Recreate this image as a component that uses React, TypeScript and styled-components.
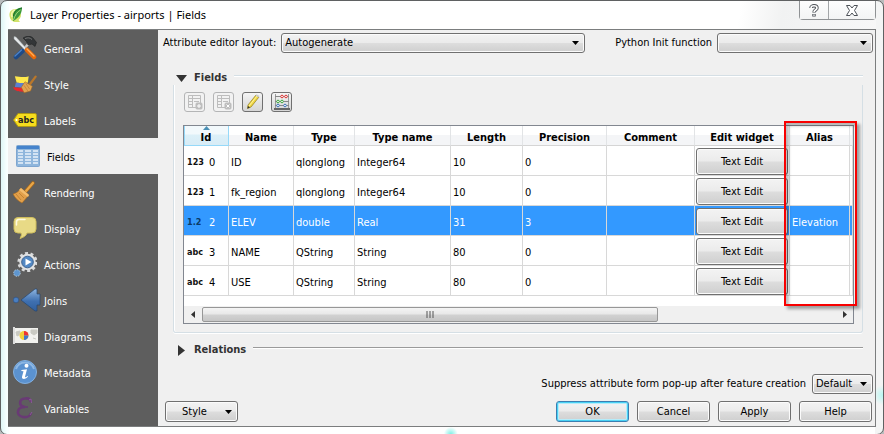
import React from "react";
import styled, { createGlobalStyle, css } from "styled-components";

const uiFont = '"DejaVu Sans Condensed", "DejaVu Sans", sans-serif';

const GlobalStyle = createGlobalStyle`
  * { box-sizing: border-box; }
  body { margin: 0; background: #b9bcbd; font: 11px/14px ${uiFont}; color: #000; }
  button, select { font: inherit; color: inherit; margin: 0; }
`;

/* ---------- window ---------- */

const Window = styled.div`
  min-height: 100vh;
  display: flex;
  flex-direction: column;
  padding: 0 7px 7px;
  border: 1px solid #5f6162;
  border-radius: 7px;
  background:
    radial-gradient(circle 7px at 51% 100%, #7ff0e6, transparent) no-repeat,
    radial-gradient(circle 10px at 100% 91%, #b8f7f2, transparent) no-repeat,
    linear-gradient(#fff, #fff) 8px 0 / calc(100% - 16px) 100% no-repeat,
    linear-gradient(90deg, #dff6f6, #f8ffff 6px, #f8f9f9 50%, #f3f4f4);
`;

const TitleBar = styled.header`
  display: flex;
  align-items: flex-start;
  height: 28px;
  padding-left: 1px;
  background: linear-gradient(100deg, transparent 84%, #f1f2f2 89%, #f7f7f7 100%);
`;

const TitleLabel = styled.h1`
  display: flex;
  align-items: center;
  gap: 7px;
  flex: 1;
  height: 28px;
  margin: 0;
  font: 11px/16px "Noto Sans", sans-serif;
`;

const CaptionButtons = styled.div`
  display: flex;
  border: 1px solid #8f9294;
  border-top: 0;
  border-radius: 0 0 4px 4px;
`;

const CaptionButton = styled.button<{ $wide?: boolean }>`
  display: grid;
  place-items: center;
  width: ${(p) => (p.$wide ? 47 : 28)}px;
  height: 18px;
  padding: 0;
  border: 0;
  background: linear-gradient(#fdfdfd, #f3f4f4);
  & + & { border-left: 1px solid #a3a6a8; }
`;

const Client = styled.div`
  flex: 1;
  display: flex;
  border: 1px solid #7b7d7e;
  border-left: 0;
  background: #f0f0f0;
`;

/* ---------- sidebar ---------- */

const Sidebar = styled.nav`
  flex: none;
  width: 150px;
  background: #5e5e5e;
`;

const NavItem = styled.a<{ $active?: boolean }>`
  display: flex;
  align-items: center;
  gap: 7px;
  height: 36px;
  padding-left: ${(p) => (p.$active ? 8 : 5)}px;
  color: ${(p) => (p.$active ? "#000" : "#fff")};
  background: ${(p) => (p.$active ? "#f0f0f0" : "transparent")};
  text-decoration: none;
`;

const NavIcon = styled.div`
  display: grid;
  place-items: center;
  flex: none;
  width: 24px;
  height: 28px;
`;

const NavLabel = styled.span`
  padding-top: 3px;
`;

/* ---------- shared controls ---------- */

const raised = css`
  border: 1px solid #707070;
  border-radius: 3px;
  box-shadow: inset 0 0 0 1px #fbfbfb;
  background: linear-gradient(#f3f3f3, #ebebeb 48%, #dddddd 52%, #cfcfcf);
`;

const PushButton = styled.button<{ $primary?: boolean }>`
  ${raised}
  width: 73px;
  height: 21px;
  padding: 0;
  ${(p) =>
    p.$primary &&
    css`
      border-color: #3c7fb1;
      box-shadow: inset 0 0 0 1px #48d1f4, inset 0 0 0 2px #b5ecfa;
    `}
`;

const MenuButton = styled(PushButton)`
  display: flex;
  align-items: center;
  justify-content: space-between;
  padding: 0 5px 0 16px;
`;

const SelectBox = styled.div<{ $width: number }>`
  display: grid;
  align-items: center;
  width: ${(p) => p.$width}px;
  > * { grid-area: 1 / 1; }
  svg { justify-self: end; margin-right: 6px; pointer-events: none; }
`;

const Select = styled.select`
  ${raised}
  appearance: none;
  width: 100%;
  height: 20px;
  padding: 0 3px;
`;

/* ---------- content ---------- */

const Content = styled.main`
  flex: 1;
  min-width: 0;
  display: flex;
  flex-direction: column;
  padding: 3px 2px 4px 5px;
`;

const FormRow = styled.div<{ $end?: boolean }>`
  display: flex;
  align-items: center;
  justify-content: ${(p) => (p.$end ? "flex-end" : "space-between")};
  gap: 6px;
`;

const LabelledField = styled.div`
  display: flex;
  align-items: center;
  gap: 5px;
`;

const Group = styled.section<{ $collapsed?: boolean }>`
  display: flex;
  flex-direction: column;
  margin: ${(p) => (p.$collapsed ? 8 : 16)}px 10px 0;
`;

const GroupHeader = styled.div<{ $collapsed?: boolean }>`
  display: flex;
  align-items: center;
  gap: 7px;
  height: 16px;
  padding-left: 3px;
  &::after {
    content: "";
    flex: 1;
    height: 1px;
    margin-bottom: 4px;
    box-shadow: 0 1px #fff;
    background: ${(p) => (p.$collapsed ? "#9a9a9a" : "#d5dfe5")};
  }
`;

const GroupToggle = styled.button`
  display: flex;
  align-items: center;
  gap: 7px;
  padding: 2px 0 0;
  border: 0;
  background: none;
  color: #333;
  font-weight: bold;
`;

const GroupBody = styled.div`
  display: flex;
  flex-direction: column;
  gap: 13px;
  padding: 7px 8px 8px 9px;
  border: solid #d5dfe5;
  border-width: 0 1px 1px;
  border-radius: 0 0 3px 3px;
  box-shadow: 0 1px #fff, inset 1px 0 #fff;
`;

const ToolRow = styled.div`
  display: flex;
  gap: 8px;
  padding-left: 1px;
`;

const ToolButton = styled.button`
  display: grid;
  place-items: center;
  width: 21px;
  height: 20px;
  padding: 0;
  border: 1px solid #707070;
  border-radius: 3px;
  background: linear-gradient(#f5f5f5, #e4e4e4 50%, #d6d6d6);
  &:disabled { border-color: #b4b5b6; background: #f2f2f2; }
`;

/* ---------- table ---------- */

const TableFrame = styled.div`
  position: relative;
  border: 1px solid #828790;
  background: #fff;
`;

const Table = styled.table`
  width: 100%;
  table-layout: fixed;
  border-collapse: separate;
  border-spacing: 0;
`;

const HeadCell = styled.th<{ $sorted?: boolean }>`
  position: relative;
  height: 20px;
  padding: 4px 0 0;
  border-right: 1px solid #e2e4e6;
  border-bottom: 1px solid #d5d5d5;
  background: linear-gradient(#fff 45%, #f4f5f7 50%);
  ${(p) =>
    p.$sorted &&
    css`
      border-color: #96d9f9;
      box-shadow: inset 1px 0 #96d9f9;
      background: linear-gradient(#f2f9fc 40%, #dcf0f8 50%, #d8ecf6);
    `}
`;

const SortMark = styled.svg`
  position: absolute;
  top: 0;
  left: 50%;
  margin-left: -3px;
`;

const Cell = styled.td`
  height: 30px;
  padding: 4px 0 0 2px;
  border: solid #d8d8d8;
  border-width: 0 1px 1px 0;
  white-space: nowrap;
`;

const WidgetCell = styled(Cell)`
  padding: 1px 0 0 1px;
`;

const BodyRow = styled.tr<{ $selected?: boolean }>`
  ${(p) => p.$selected && css`color: #fff; background: #3399ff;`}
`;

const IdValue = styled.div`
  display: flex;
  align-items: center;
  gap: 5px;
`;

const TypeTag = styled.b<{ $dim?: boolean }>`
  width: 17px;
  font-size: 9px;
  line-height: 12px;
  padding-bottom: 2px;
  margin-left: 1px;
  color: ${(p) => (p.$dim ? "#0b3a66" : "#111")};
`;

const WidgetButton = styled.button`
  ${raised}
  display: block;
  width: 92px;
  height: 27px;
  padding: 2px 0 0;
  color: #000;
`;

const ScrollBar = styled.div`
  display: grid;
  grid-template-columns: 17px 1fr 17px;
  align-items: center;
  justify-items: center;
  height: 17px;
  margin-top: 10px;
  background: #f0f0f0;
`;

const ScrollTrack = styled.div`
  justify-self: stretch;
  padding-left: 1px;
`;

const ScrollThumb = styled.div`
  display: grid;
  place-items: center;
  width: 72%;
  height: 15px;
  border: 1px solid #979797;
  border-radius: 2px;
  background: linear-gradient(#f4f4f4, #e8e8e8 48%, #d2d2d2 52%, #c6c6c6);
`;

const Highlight = styled.div`
  position: absolute;
  top: -5px;
  right: -4px;
  bottom: 17px;
  width: 73px;
  border: 2px solid #f80000;
  box-shadow: 3px 3px 3px rgba(0, 0, 0, 0.35), inset 3px 3px 3px rgba(0, 0, 0, 0.25);
  pointer-events: none;
`;

const Footer = styled.footer`
  display: flex;
  justify-content: space-between;
  padding: 0 1px 0 2px;
  margin-top: 7px;
`;

const ButtonRow = styled.div`
  display: flex;
  gap: 8px;
`;

const Spacer = styled.div`
  flex: 1;
`;

/* ---------- icons ---------- */

const Down = () => (
  <svg width="7" height="4" viewBox="0 0 7 4"><path d="M0 0h7L3.5 4z" /></svg>
);

const Logo = () => (
  <svg width="14" height="16" viewBox="0 0 14 16">
    <path d="M7 2C2 2 0 5 .5 9 1 13 4 15.500 8 15l3 0-1.500-2C12 11 12.500 8 11.500 5z" fill="#d3e36b" />
    <path d="M6 3C3 4 2 7 3 10" stroke="#f4f7b0" strokeWidth="1.600" fill="none" />
    <path d="M13 .5C8 1 4 4 4 9l0 5C8 12 13 8 13 .5z" fill="#3c9a3c" />
    <path d="M11.500 3C8 5 6 8 4.500 13" stroke="#a5d67a" fill="none" />
    <path d="M13 1C9 2 5 4 4.500 9" stroke="#17692c" fill="none" />
  </svg>
);

const ToolsIcon = () => (
  <svg width="24" height="24" viewBox="0 0 24 24">
    <path d="M17 6L10 14" stroke="#c9c9c9" strokeWidth="2.500" />
    <path d="M10 2c4-2.500 8-2 10 0l3.500 4.500-1.500 4-3-2.500-4 1-1.500-3.500z" fill="#333638" stroke="#191a1b" strokeWidth=".5" />
    <path d="M12 2.500c3-1 5-1 7 1" stroke="#777" fill="none" />
    <path d="M1 .5l2 .5 10 11-1.500 1.500L1 3z" fill="#e5e8ea" stroke="#9aa0a4" strokeWidth=".5" />
    <path d="M9.500 15l-6.500 6" stroke="#1e4a87" strokeWidth="4.500" strokeLinecap="round" />
    <path d="M8.500 14l-6.500 6" stroke="#4d82c6" strokeWidth="1.400" strokeLinecap="round" />
    <path d="M14 14l7 7" stroke="#e8690b" strokeWidth="4.500" strokeLinecap="round" />
    <path d="M14 13l7 7" stroke="#ffad57" strokeWidth="1.400" strokeLinecap="round" />
  </svg>
);

const StyleIcon = () => (
  <svg width="24" height="19" viewBox="0 0 26 20">
    <path d="M2 1c5 0 8 2 15 0l-1 7C9 9 7 8 4 8z" fill="#ffe94b" />
    <path d="M3 8c5 0 7 1 11 0l-2 5c-4 1-6 0-10 0z" fill="#5c7fd0" />
    <path d="M0 13c4 0 8 1 12 0l3 4-3 1C7 18 4 18 1 15z" fill="#e9272c" />
    <path d="M24.500 1.500l-6 8" stroke="#b9772b" strokeWidth="2.500" strokeLinecap="round" />
    <path d="M13 7l8 5-2 5-7 2-3-6z" fill="#e0a453" stroke="#a4671f" strokeWidth=".6" />
    <path d="M12 11l4 6M14 9l4 6" stroke="#b77a32" strokeWidth=".7" />
  </svg>
);

const LabelsIcon = () => (
  <svg width="24" height="14" viewBox="0 0 24 14">
    <path d="M5 .5h17a1.500 1.500 0 011.500 1.500v10a1.500 1.500 0 01-1.500 1.500H5L.5 7z" fill="#f6dc1d" stroke="#b09a14" />
    <circle cx="3.500" cy="7" r="1" fill="#fff" />
    <text x="5" y="10" fontSize="9" fontWeight="bold" fontFamily="DejaVu Sans Condensed" fill="#222">abc</text>
  </svg>
);

const FieldsIcon = () => (
  <svg width="24" height="22" viewBox="0 0 24 22">
    <rect x=".5" y=".5" width="23" height="21" rx="1" fill="#8fb6dc" stroke="#7fa6d0" />
    <rect x="1" y="1" width="22" height="3" fill="#4583cc" />
    <path d="M2 6h5M9 6h6M17 6h5M2 9h5M9 9h6M17 9h5M2 12h5M9 12h6M17 12h5M2 15h5M9 15h6M17 15h5M2 18h5M9 18h6M17 18h5" stroke="#d3e3f3" strokeWidth="2" />
  </svg>
);

const BroomIcon = () => (
  <svg width="24" height="24" viewBox="0 0 24 24">
    <path d="M20 3l-7 8" stroke="#a8691c" strokeWidth="3.600" strokeLinecap="round" />
    <path d="M20 3l-7 8" stroke="#e9a748" strokeWidth="2.200" strokeLinecap="round" />
    <path d="M8 8l8 7-7 8C5 21 2 18 0 14c4-1 6-3 8-6z" fill="#e2a04b" stroke="#a8691c" strokeWidth=".6" />
    <path d="M8 8l8 7-1 2-9-7z" fill="#f3bd6f" />
    <path d="M3 14l5 6M6 13l5 5" stroke="#bd7c2c" strokeWidth=".8" />
  </svg>
);

const BubbleIcon = () => (
  <svg width="24" height="24" viewBox="0 0 24 24">
    <path d="M5 1.500h14a4 4 0 014 4V13a4 4 0 01-4 4h-5c-1 3-3 4-7 5.500 1-2 2-4 1-5.500H5a4 4 0 01-4-4V5.500a4 4 0 014-4z" fill="#e8da86" stroke="#cfbd5c" />
    <path d="M3.500 9V6A2.500 2.500 0 016 3.500h6" stroke="#fffbe0" strokeWidth="1.500" fill="none" strokeLinecap="round" />
  </svg>
);

const ActionsIcon = () => (
  <svg width="24" height="26" viewBox="0 0 24 26">
    <circle cx="14.500" cy="11" r="8.800" fill="none" stroke="#d9dadb" strokeWidth="2.600" strokeDasharray="3 2.530" />
    <circle cx="14.500" cy="11" r="8.200" fill="#e2e3e4" />
    <circle cx="14.500" cy="11" r="5.800" fill="#5288c4" stroke="#3d6390" />
    <path d="M12.500 7.500l6 3.500-6 3.500z" fill="#fff" />
    <circle cx="4" cy="22" r="3.300" fill="#5e96d0" stroke="#b5c4d2" strokeDasharray="1.500 1" />
  </svg>
);

const JoinsIcon = () => (
  <svg width="28" height="24" viewBox="0 0 28 24">
    <defs>
      <linearGradient id="joinsFill" x1="0" x2="0" y1="0" y2="1">
        <stop offset="0" stopColor="#8db4e0" /><stop offset=".55" stopColor="#3f70b0" /><stop offset="1" stopColor="#2f5f9e" />
      </linearGradient>
    </defs>
    <circle cx="3" cy="12" r="2.800" fill="#4a7ec0" stroke="#2b4f80" strokeWidth=".6" />
    <path d="M8 12L22 1l2 0v5h3v11h-3v6h-2z" fill="url(#joinsFill)" stroke="#27466f" strokeWidth=".7" />
  </svg>
);

const DiagramsIcon = () => (
  <svg width="25" height="18" viewBox="0 0 25 18">
    <path d="M1 0v17" stroke="#ddd" strokeWidth="2" />
    <path d="M2 1h23v15H2z" fill="#f1f1ee" />
    <path d="M3 5l4-1-1 4-2 1zM18 3h6v3l-3 2-3-2zM20 11l3 1" fill="#c9c9c2" stroke="#c9c9c2" />
    <circle cx="11" cy="8.500" r="4.500" fill="#f3cf3a" />
    <path d="M11 8.500V4a4.500 4.500 0 014.500 4.500z" fill="#e33" />
    <path d="M11 8.500h4.500A4.500 4.500 0 0111 13z" fill="#4277c9" />
  </svg>
);

const InfoIcon = () => (
  <svg width="24" height="24" viewBox="0 0 24 24">
    <circle cx="12" cy="12" r="11.500" fill="#5b92d0" stroke="#84b0df" />
    <path d="M3 9a9.500 9.500 0 0118 0" stroke="#8db7e3" strokeWidth="2" fill="none" />
    <circle cx="13.500" cy="5.800" r="2" fill="#fff" />
    <path d="M8.500 10l5.500-.8-2 7.600c0 .8 1 .6 2.400-.8l.6.600c-2 3-6.500 3.400-6 .2l1.500-5.600-2.200-.2z" fill="#fff" />
  </svg>
);

const EpsilonIcon = () => (
  <svg width="24" height="22" viewBox="0 0 24 22">
    <path d="M18 5c-.5-3-3-4-6-3.500C6 2 5 9 12 10 3 10 3 19 10 20c4 .5 7-.5 8-4" stroke="#693a75" strokeWidth="2.600" fill="none" />
    <path d="M12 10h3" stroke="#693a75" strokeWidth="1.500" />
    <path d="M16 3l2-1 .5 4M17 18l2-3" stroke="#8a5a96" fill="none" />
  </svg>
);

const ColumnIcon = ({ remove }: { remove?: boolean }) => (
  <svg width="16" height="16" viewBox="0 0 16 16" fill="none" stroke="#bdbdbd">
    <path d="M1.500 1.500h12v12h-12zM1.500 4.500h12M5.500 1.500v12M2 7.500h3M2 10.500h3M7 7.500h5" />
    <rect x="9" y="9" width="6" height="6" rx="1" fill="#bdbdbd" />
    {remove ? <path d="M10.500 10.500l3 3M13.500 10.500l-3 3" stroke="#fff" /> : <path d="M12 10v4M10 12h4" stroke="#fff" />}
  </svg>
);

const PencilIcon = () => (
  <svg width="16" height="16" viewBox="0 0 16 16">
    <path d="M11 1l3 2-8 10-3.500 1.500L3 11z" fill="#f1d845" stroke="#8d7a1a" strokeWidth=".7" />
    <path d="M12 2L4 12" stroke="#fff4a0" />
    <path d="M2.500 14.500L3 12l2 1.500z" fill="#333" />
    <path d="M10.500 1.500l3 2 1-1.500-2.500-1.500z" fill="#c9c9c9" />
  </svg>
);

const AbacusIcon = () => (
  <svg width="16" height="16" viewBox="0 0 16 16" fill="none">
    <path d="M1.500 0v15M14.500 0v15" stroke="#9a9a9a" />
    <path d="M1 2.500h14M1 7.500h14M1 11.500h14" stroke="#888" />
    <path d="M0 15h16" stroke="#666" strokeWidth="2" />
    <g fill="#fff">
      <g stroke="#d33"><circle cx="8" cy="2.500" r="1.300" /><circle cx="12" cy="2.500" r="1.300" /></g>
      <g stroke="#3aa53a"><circle cx="4" cy="7.500" r="1.300" /><circle cx="8" cy="7.500" r="1.300" /></g>
      <g stroke="#3c72b8"><circle cx="4" cy="11.500" r="1.300" /><circle cx="11" cy="11.500" r="1.300" /></g>
    </g>
  </svg>
);

/* ---------- data ---------- */

const pages = [
  { name: "General", icon: <ToolsIcon /> },
  { name: "Style", icon: <StyleIcon /> },
  { name: "Labels", icon: <LabelsIcon /> },
  { name: "Fields", icon: <FieldsIcon /> },
  { name: "Rendering", icon: <BroomIcon /> },
  { name: "Display", icon: <BubbleIcon /> },
  { name: "Actions", icon: <ActionsIcon /> },
  { name: "Joins", icon: <JoinsIcon /> },
  { name: "Diagrams", icon: <DiagramsIcon /> },
  { name: "Metadata", icon: <InfoIcon /> },
  { name: "Variables", icon: <EpsilonIcon /> },
];

const columns = [
  { name: "Id", width: 45 },
  { name: "Name", width: 65 },
  { name: "Type", width: 61 },
  { name: "Type name", width: 96 },
  { name: "Length", width: 72 },
  { name: "Precision", width: 84 },
  { name: "Comment" },
  { name: "Edit widget", width: 95 },
  { name: "Alias", width: 60 },
  { name: "", width: 3 },
];

const Col = styled.col<{ $width?: number }>`
  width: ${(p) => (p.$width ? `${p.$width}px` : "auto")};
`;

const rows = [
  { tag: "123", name: "ID", type: "qlonglong", typeName: "Integer64", length: 10, precision: 0, alias: "" },
  { tag: "123", name: "fk_region", type: "qlonglong", typeName: "Integer64", length: 10, precision: 0, alias: "" },
  { tag: "1.2", name: "ELEV", type: "double", typeName: "Real", length: 31, precision: 3, alias: "Elevation", selected: true },
  { tag: "abc", name: "NAME", type: "QString", typeName: "String", length: 80, precision: 0, alias: "" },
  { tag: "abc", name: "USE", type: "QString", typeName: "String", length: 80, precision: 0, alias: "" },
];

export default function App() {
  return (
    <>
      <GlobalStyle />
      <Window>
        <TitleBar>
          <TitleLabel><Logo />Layer Properties - airports | Fields</TitleLabel>
          <CaptionButtons>
            <CaptionButton aria-label="What's this">
              <svg width="10" height="13" viewBox="0 0 10 13" fill="none">
                <path d="M2 4c0-3 6-3 6 0 0 2-3 2-3 4.500M5 10v2.500" stroke="#4c5157" strokeWidth="3.400" />
                <path d="M2 4c0-3 6-3 6 0 0 2-3 2-3 4M5 10.500v1.200" stroke="#fff" strokeWidth="1.600" />
              </svg>
            </CaptionButton>
            <CaptionButton $wide aria-label="Close">
              <svg width="12" height="11" viewBox="0 0 12 11">
                <path d="M.5.500h3.500l2 2.500 2-2.500h3.500L8.500 5.500l3 5H8L6 8l-2 2.500H.5l3-5z" fill="#fff" stroke="#4c5157" />
              </svg>
            </CaptionButton>
          </CaptionButtons>
        </TitleBar>
        <Client>
          <Sidebar>
            {pages.map((p) => (
              <NavItem key={p.name} href="#" $active={p.name === "Fields"}>
                <NavIcon>{p.icon}</NavIcon>
                <NavLabel>{p.name}</NavLabel>
              </NavItem>
            ))}
          </Sidebar>
          <Content>
            <FormRow>
              <LabelledField>
                <label htmlFor="layout">Attribute editor layout:</label>
                <SelectBox $width={304}>
                  <Select id="layout"><option>Autogenerate</option></Select>
                  <Down />
                </SelectBox>
              </LabelledField>
              <LabelledField>
                <label htmlFor="init">Python Init function</label>
                <SelectBox $width={156}>
                  <Select id="init"><option></option></Select>
                  <Down />
                </SelectBox>
              </LabelledField>
            </FormRow>
            <Group>
              <GroupHeader>
                <GroupToggle aria-expanded="true">
                  <svg width="11" height="7" viewBox="0 0 11 7"><path d="M0 0h11L5.500 7z" fill="#333" /></svg>
                  Fields
                </GroupToggle>
              </GroupHeader>
              <GroupBody>
                <ToolRow>
                  <ToolButton disabled aria-label="New column"><ColumnIcon /></ToolButton>
                  <ToolButton disabled aria-label="Delete column"><ColumnIcon remove /></ToolButton>
                  <ToolButton aria-label="Toggle editing"><PencilIcon /></ToolButton>
                  <ToolButton aria-label="Field calculator"><AbacusIcon /></ToolButton>
                </ToolRow>
                <TableFrame>
                  <Table>
                    <colgroup>
                      {columns.map((c) => <Col key={c.name} $width={c.width} />)}
                    </colgroup>
                    <thead>
                      <tr>
                        {columns.map((c) => (
                          <HeadCell key={c.name} $sorted={c.name === "Id"}>
                            {c.name === "Id" && (
                              <SortMark width="7" height="4" viewBox="0 0 7 4"><path d="M0 4l3.500-4L7 4z" fill="#4a90b5" /></SortMark>
                            )}
                            {c.name}
                          </HeadCell>
                        ))}
                      </tr>
                    </thead>
                    <tbody>
                      {rows.map((r, i) => (
                        <BodyRow key={r.name} $selected={r.selected}>
                          <Cell><IdValue><TypeTag $dim={r.selected}>{r.tag}</TypeTag>{i}</IdValue></Cell>
                          <Cell>{r.name}</Cell>
                          <Cell>{r.type}</Cell>
                          <Cell>{r.typeName}</Cell>
                          <Cell>{r.length}</Cell>
                          <Cell>{r.precision}</Cell>
                          <Cell />
                          <WidgetCell><WidgetButton>Text Edit</WidgetButton></WidgetCell>
                          <Cell>{r.alias}</Cell>
                          <Cell />
                        </BodyRow>
                      ))}
                    </tbody>
                  </Table>
                  <ScrollBar>
                    <svg width="4" height="7" viewBox="0 0 4 7"><path d="M4 0v7L0 3.500z" fill="#333" /></svg>
                    <ScrollTrack>
                      <ScrollThumb>
                        <svg width="8" height="7" viewBox="0 0 8 7"><path d="M1 0v7M4 0v7M7 0v7" stroke="#555" /></svg>
                      </ScrollThumb>
                    </ScrollTrack>
                    <svg width="4" height="7" viewBox="0 0 4 7"><path d="M0 0v7l4-3.500z" fill="#333" /></svg>
                  </ScrollBar>
                  <Highlight />
                </TableFrame>
              </GroupBody>
            </Group>
            <Group $collapsed>
              <GroupHeader $collapsed>
                <GroupToggle aria-expanded="false">
                  <svg width="11" height="11" viewBox="0 0 11 11"><path d="M2 0v11l7-5.500z" fill="#333" /></svg>
                  Relations
                </GroupToggle>
              </GroupHeader>
            </Group>
            <Spacer />
            <FormRow $end>
              <label htmlFor="suppress">Suppress attribute form pop-up after feature creation</label>
              <SelectBox $width={61}>
                <Select id="suppress"><option>Default</option></Select>
                <Down />
              </SelectBox>
            </FormRow>
            <Footer>
              <MenuButton>Style<Down /></MenuButton>
              <ButtonRow>
                <PushButton $primary>OK</PushButton>
                <PushButton>Cancel</PushButton>
                <PushButton>Apply</PushButton>
                <PushButton>Help</PushButton>
              </ButtonRow>
            </Footer>
          </Content>
        </Client>
      </Window>
    </>
  );
}
